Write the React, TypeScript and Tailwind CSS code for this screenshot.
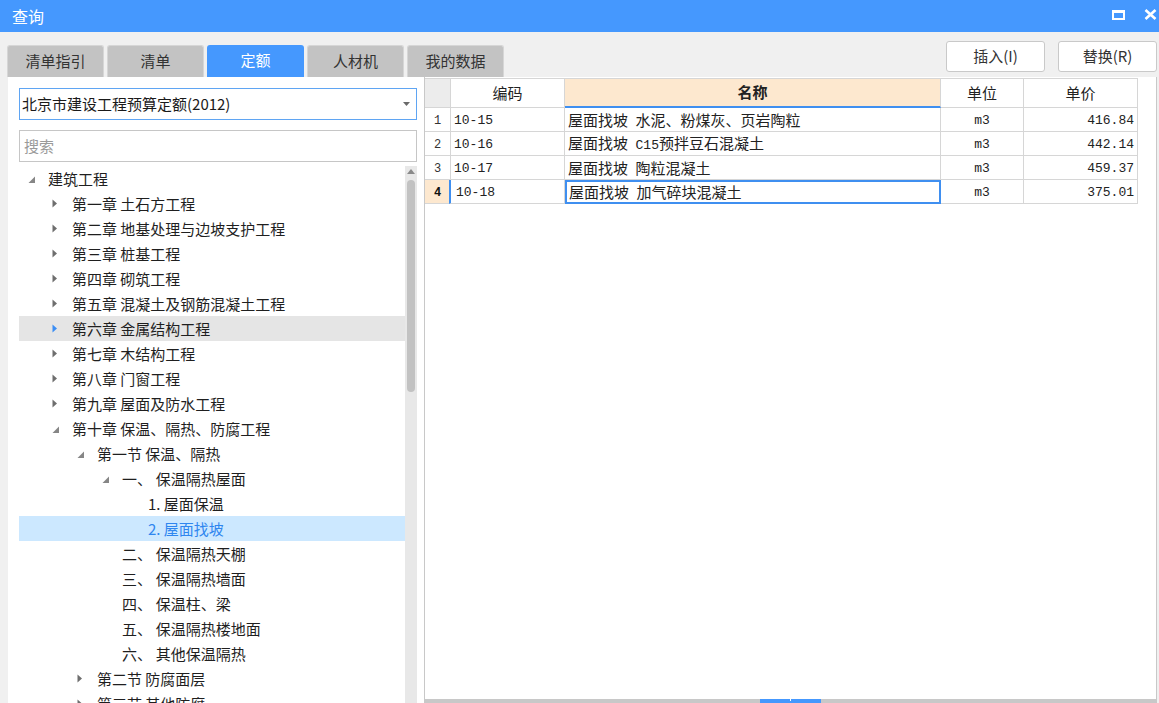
import React from "react";

const CJK = { fontFamily: '"Noto Sans CJK SC", "Noto Sans", sans-serif' };
const MONO = { fontFamily: '"Liberation Mono", "Noto Sans CJK SC", monospace' };

type Tri = "open" | "closed" | "hot" | "none";
const tree: { lvl: number; t: string; tri: Tri; hover?: boolean; sel?: boolean }[] = [
  { lvl: 0, t: "建筑工程", tri: "open" },
  { lvl: 1, t: "第一章 土石方工程", tri: "closed" },
  { lvl: 1, t: "第二章 地基处理与边坡支护工程", tri: "closed" },
  { lvl: 1, t: "第三章 桩基工程", tri: "closed" },
  { lvl: 1, t: "第四章 砌筑工程", tri: "closed" },
  { lvl: 1, t: "第五章 混凝土及钢筋混凝土工程", tri: "closed" },
  { lvl: 1, t: "第六章 金属结构工程", tri: "hot", hover: true },
  { lvl: 1, t: "第七章 木结构工程", tri: "closed" },
  { lvl: 1, t: "第八章 门窗工程", tri: "closed" },
  { lvl: 1, t: "第九章 屋面及防水工程", tri: "closed" },
  { lvl: 1, t: "第十章 保温、隔热、防腐工程", tri: "open" },
  { lvl: 2, t: "第一节 保温、隔热", tri: "open" },
  { lvl: 3, t: "一、\u2005保温隔热屋面", tri: "open" },
  { lvl: 4, t: "1. 屋面保温", tri: "none" },
  { lvl: 4, t: "2. 屋面找坡", tri: "none", sel: true },
  { lvl: 3, t: "二、\u2005保温隔热天棚", tri: "none" },
  { lvl: 3, t: "三、\u2005保温隔热墙面", tri: "none" },
  { lvl: 3, t: "四、\u2005保温柱、梁", tri: "none" },
  { lvl: 3, t: "五、\u2005保温隔热楼地面", tri: "none" },
  { lvl: 3, t: "六、\u2005其他保温隔热", tri: "none" },
  { lvl: 2, t: "第二节 防腐面层", tri: "closed" },
  { lvl: 2, t: "第三节 其他防腐", tri: "closed" },
];
const offs = [29, 53, 78, 103, 129];

function TriIcon({ kind }: { kind: Tri }) {
  if (kind === "open")
    return (
      <svg width="8" height="8" viewBox="0 0 8 8" className="mt-[2px]">
        <polygon points="7,0.5 7,7 0.5,7" fill="#868686" />
      </svg>
    );
  if (kind === "closed" || kind === "hot")
    return (
      <svg width="6" height="9" viewBox="0 0 6 9">
        <polygon points="0.5,0.5 5,4.5 0.5,8.5" fill={kind === "hot" ? "#3b8ef5" : "#6e6e6e"} />
      </svg>
    );
  return null;
}

const rows = [
  { n: "1", code: "10-15", name: <span>屋面找坡{"\u2002"}水泥、粉煤灰、页岩陶粒</span>, unit: "m3", price: "416.84" },
  {
    n: "2",
    code: "10-16",
    name: (
      <span>
        屋面找坡{"\u2002"}
        <span style={MONO} className="text-[13px]">C15</span>预拌豆石混凝土
      </span>
    ),
    unit: "m3",
    price: "442.14",
  },
  { n: "3", code: "10-17", name: <span>屋面找坡{"\u2002"}陶粒混凝土</span>, unit: "m3", price: "459.37" },
  { n: "4", code: "10-18", name: <span>屋面找坡{"\u2002"}加气碎块混凝土</span>, unit: "m3", price: "375.01" },
];

export default function App() {
  const tabs = ["清单指引", "清单", "定额", "人材机", "我的数据"];
  return (
    <div style={CJK} className="w-[1159px] h-[703px] bg-[#f0f0f0] flex flex-col overflow-hidden text-[#1f1f1f]">
      {/* title bar */}
      <div className="h-[32px] shrink-0 bg-[#4598fe] flex items-center justify-between pl-[12px] pr-[2px] text-white">
        <span className="text-[16px] leading-none mt-[-1px]">查询</span>
        <div className="flex items-center gap-[19px]">
          <div className="w-[13px] h-[10px] border-white border-t-[3px] border-x-[2px] border-b-[2px] mt-[-3px]" />
          <svg width="13" height="11" viewBox="0 0 13 11" className="mt-[-3px]">
            <path d="M1.5 1 L11.5 10 M11.5 1 L1.5 10" stroke="#fff" strokeWidth="2.6" />
          </svg>
        </div>
      </div>

      {/* tabs + buttons */}
      <div className="h-[45px] shrink-0 flex justify-between">
        <div className="flex items-end gap-[3px] pl-[7px]">
          {tabs.map((t) => (
            <div
              key={t}
              className={
                "w-[97px] h-[32px] rounded-t-[3px] flex items-center justify-center text-[15px] pb-[1px] " +
                (t === "定额"
                  ? "bg-[#4598fe] text-white"
                  : "bg-[#c3c3c3] text-[#333] border border-b-0 border-[#d6d6d6]")
              }
            >
              {t}
            </div>
          ))}
        </div>
        <div className="flex gap-[13px] pt-[9px] pr-[2px]">
          {["插入(I)", "替换(R)"].map((b) => (
            <div
              key={b}
              className="w-[99px] h-[31px] bg-white border border-[#c9c9c9] rounded-[3px] flex items-center justify-center text-[15px] text-[#333]"
            >
              {b}
            </div>
          ))}
        </div>
      </div>

      {/* main */}
      <div className="flex-1 min-h-0 flex pl-[8px] pr-[2px]">
        {/* left panel */}
        <div className="w-[416px] bg-white flex flex-col pl-[11px] pr-[7px] pt-[11px] overflow-hidden">
          <div className="h-[32px] shrink-0 border border-[#5fa5f3] flex items-center justify-between pl-[2px] pr-[6px]">
            <span className="text-[15px] text-[#1a1a1a]">北京市建设工程预算定额(2012)</span>
            <svg width="7" height="4" viewBox="0 0 7 4">
              <polygon points="0,0 7,0 3.5,4" fill="#6a6a6a" />
            </svg>
          </div>
          <div className="h-[32px] shrink-0 mt-[10px] border border-[#c6c6c6] flex items-center pl-[4px]">
            <span className="text-[15px] text-[#9a9a9a]">搜索</span>
          </div>
          <div className="flex-1 min-h-0 flex mt-[4px]">
            <div className="flex-1 min-w-0 flex flex-col overflow-hidden">
              {tree.map((r, i) => (
                <div
                  key={i}
                  className={
                    "h-[25px] shrink-0 flex items-center " +
                    (r.sel ? "bg-[#cce8ff]" : r.hover ? "bg-[#e5e5e5]" : "")
                  }
                  style={{ paddingLeft: offs[r.lvl] - 20 }}
                >
                  <div className="w-[20px] shrink-0 flex items-center">
                    <TriIcon kind={r.tri} />
                  </div>
                  <span
                    className={
                      "text-[15px] whitespace-pre leading-none mt-[-1px] " +
                      (r.sel ? "text-[#2f86ef]" : "text-[#1f1f1f]")
                    }
                  >
                    {r.t}
                  </span>
                </div>
              ))}
            </div>
            {/* scrollbar */}
            <div className="w-[12px] shrink-0 bg-[#e8e8e8] flex flex-col items-center pt-[3px] mb-[-6px]">
              <svg width="8" height="5" viewBox="0 0 8 5">
                <polygon points="0,5 8,5 4,0" fill="#8a8a8a" />
              </svg>
              <div className="w-[8px] h-[212px] mt-[6px] rounded-full bg-[#c2c2c2]" />
              <div className="flex-1" />
              <svg width="8" height="5" viewBox="0 0 8 5">
                <polygon points="0,0 8,0 4,5" fill="#8a8a8a" />
              </svg>
            </div>
          </div>
        </div>

        {/* table panel */}
        <div className="flex-1 min-w-0 bg-white border-l border-r border-[#c8c8c8] flex flex-col">
          <div className="flex-1 min-h-0 pt-[1px]">
            <div className="grid grid-cols-[26px_114px_376px_83px_114px] w-[713px] text-[15px] text-[#222]">
              {/* header */}
              <div className="h-[30px] bg-[#ececec] border-t border-r border-b border-[#d6d6d6]" />
              <div className="h-[30px] flex items-center justify-center border-t border-r border-b border-[#d6d6d6]">编码</div>
              <div className="h-[30px] flex items-center justify-center bg-[#fde8cf] font-bold border-t border-r border-[#d6d6d6] border-b-2 border-b-[#3f8ff0]">
                名称
              </div>
              <div className="h-[30px] flex items-center justify-center border-t border-r border-b border-[#d6d6d6]">单位</div>
              <div className="h-[30px] flex items-center justify-center border-t border-r border-b border-[#d6d6d6]">单价</div>
              {rows.map((r, i) => {
                const last = i === 3;
                return (
                  <React.Fragment key={r.n}>
                    <div
                      style={MONO}
                      className={
                        "h-[24px] flex items-center justify-center pt-[2px] text-[12px] border-r border-b border-[#d6d6d6] " +
                        (last ? "bg-[#fde8cf] font-bold text-[#111]" : "text-[#333]")
                      }
                    >
                      {r.n}
                    </div>
                    <div
                      style={MONO}
                      className={
                        "h-[24px] flex items-center pt-[2px] text-[13px] border-r border-b border-[#d6d6d6] " +
                        (last ? "border-l-2 border-l-[#3f8ff0] ml-[-2px] pl-[5px]" : "pl-[3px]")
                      }
                    >
                      {r.code}
                    </div>
                    <div
                      className={
                        "h-[24px] flex items-center pt-[1px] whitespace-pre " +
                        (last ? "border-2 border-[#3f8ff0] pl-[2px]" : "pl-[3px] border-r border-b border-[#d6d6d6]")
                      }
                    >
                      {r.name}
                    </div>
                    <div style={MONO} className="h-[24px] flex items-center justify-center pt-[2px] text-[13px] border-r border-b border-[#d6d6d6]">
                      {r.unit}
                    </div>
                    <div style={MONO} className="h-[24px] flex items-center justify-end pt-[2px] pr-[3px] text-[13px] border-r border-b border-[#d6d6d6]">
                      {r.price}
                    </div>
                  </React.Fragment>
                );
              })}
            </div>
          </div>
          <div className="h-[4px] shrink-0 bg-[#c8c8c8] flex">
            <div className="ml-[335px] w-[61px] h-full bg-[#4598fe] flex justify-center">
              <div className="w-[1px] h-[2px] bg-white" />
            </div>
          </div>
        </div>
      </div>
    </div>
  );
}
